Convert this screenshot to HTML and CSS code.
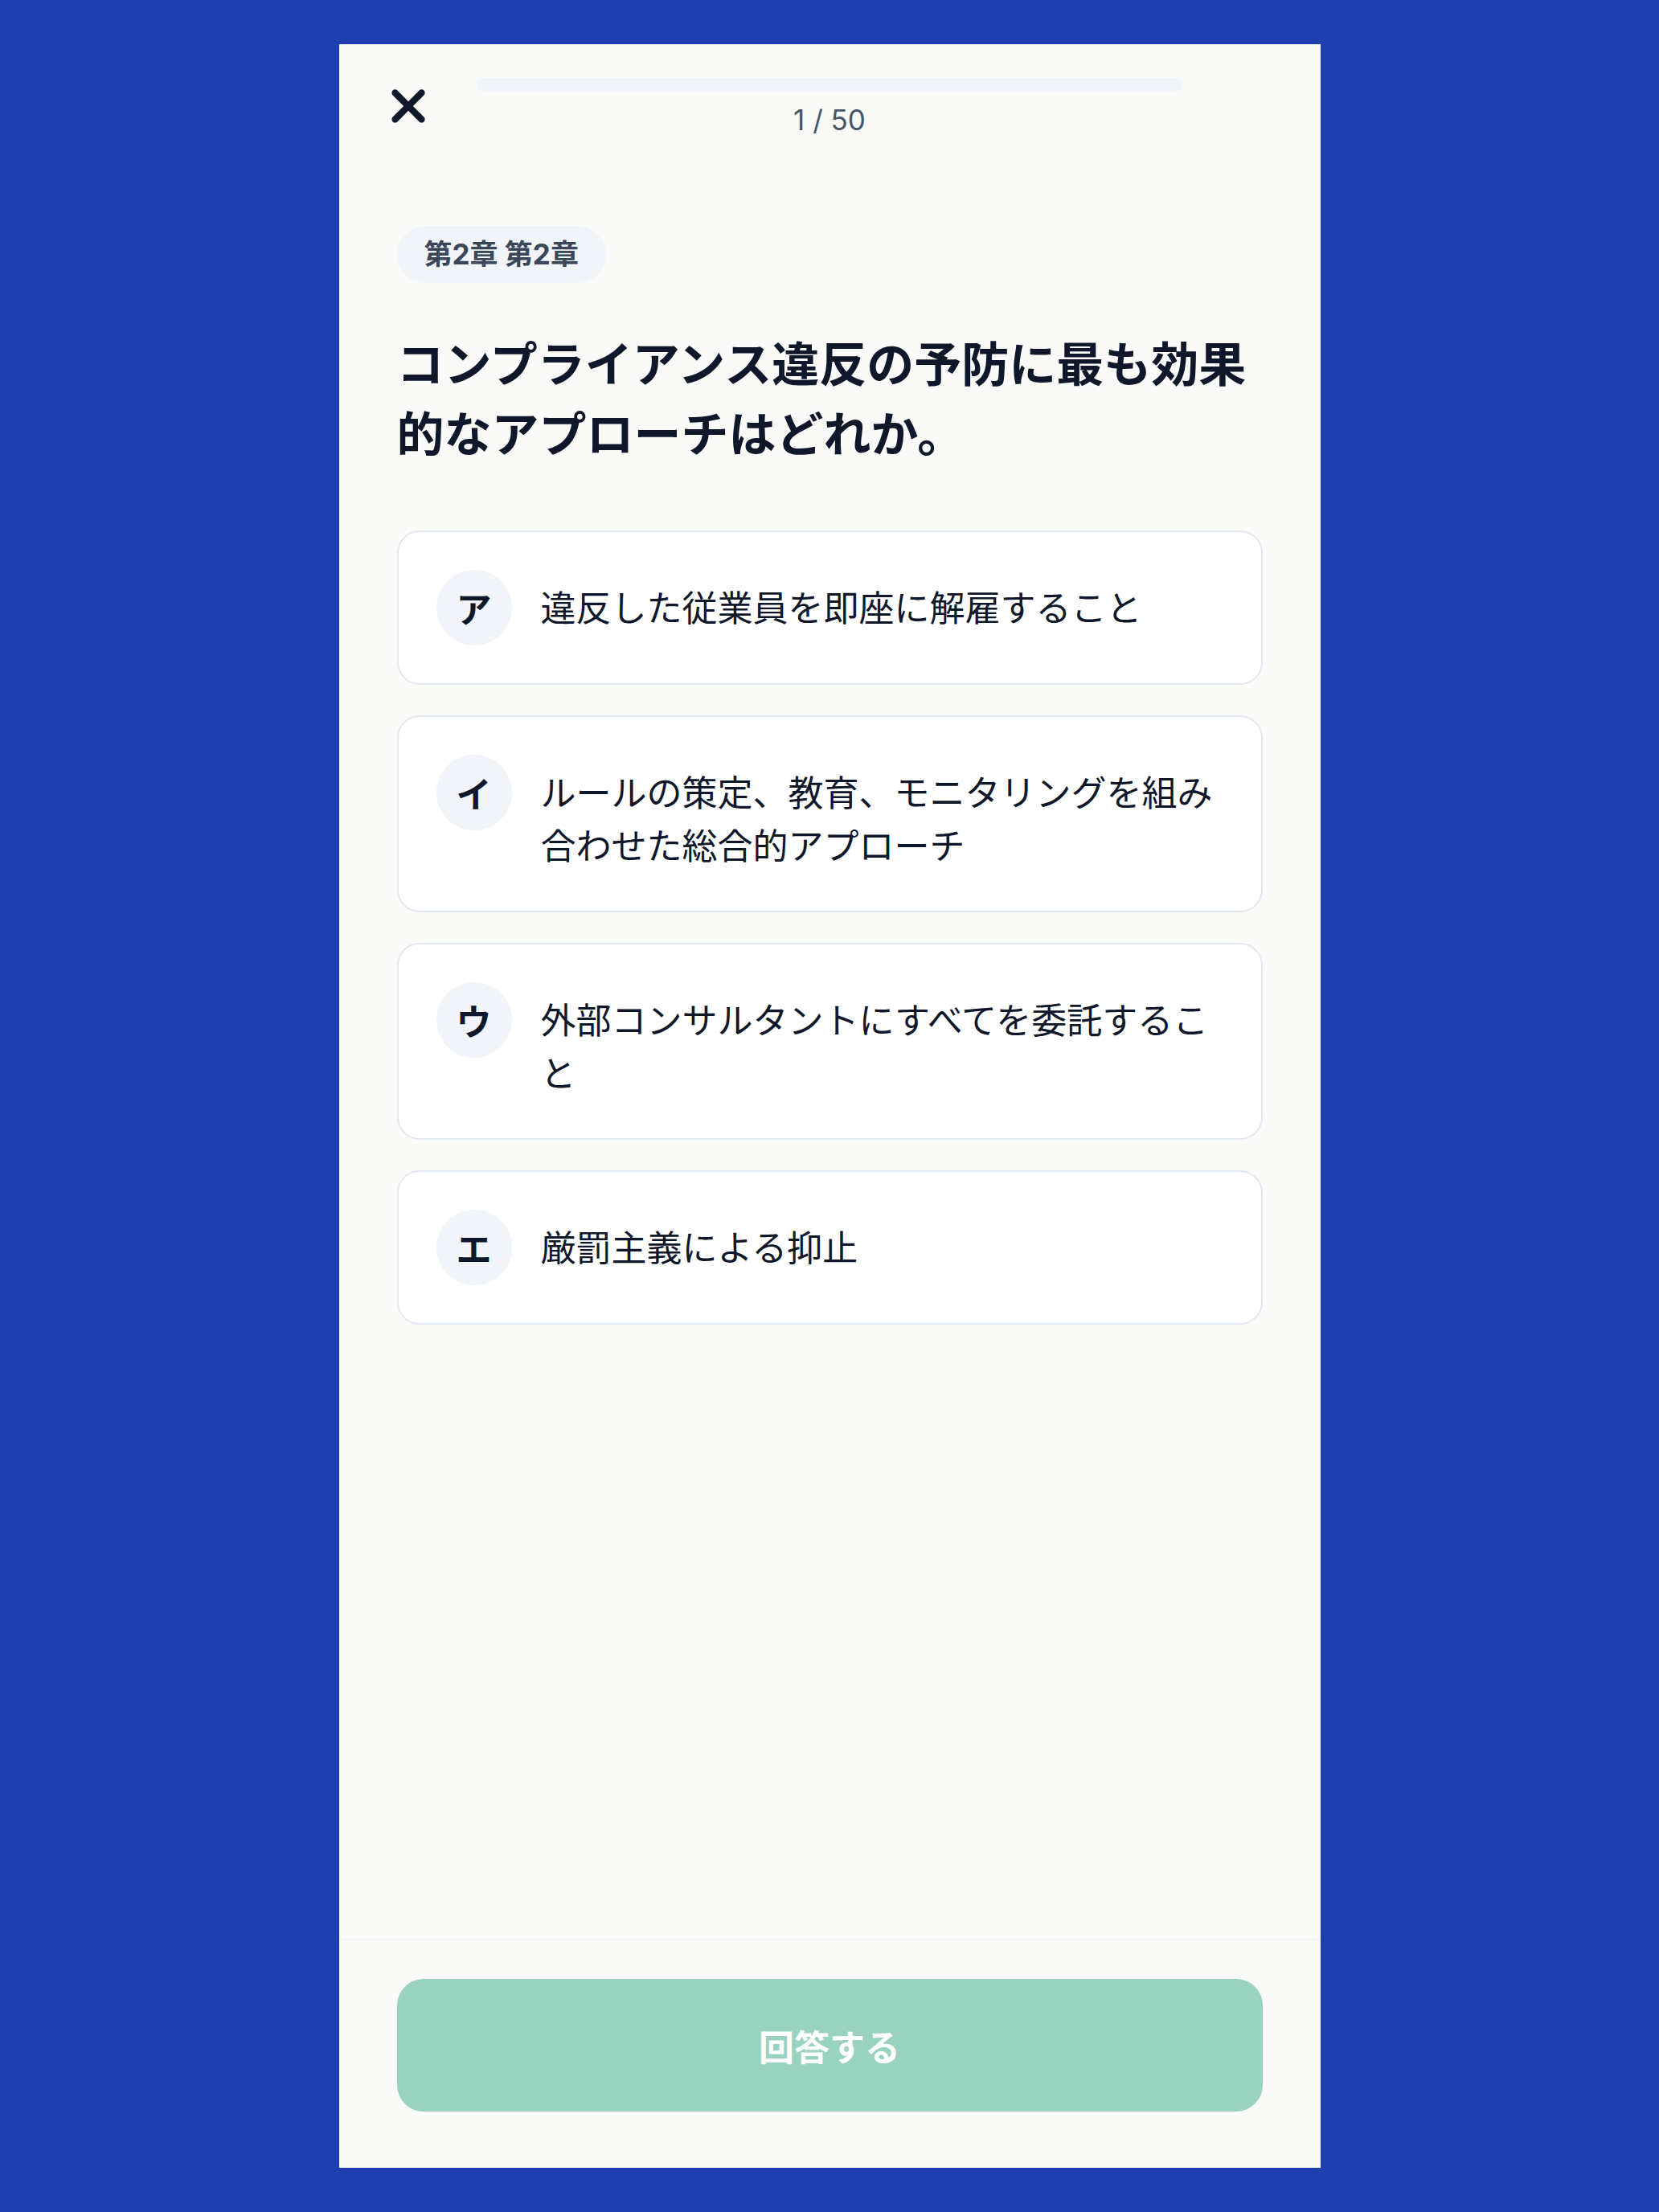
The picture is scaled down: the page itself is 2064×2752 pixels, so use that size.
FILE: index.html
```html
<!DOCTYPE html>
<html lang="ja">
<head>
<meta charset="utf-8">
<title>Quiz</title>
<link rel="stylesheet" href="styles.css">
</head>
<body>
<div class="panel">
  <header class="header">
    <button class="close-btn" aria-label="閉じる">
      <svg viewBox="0 0 24 24" width="66" height="66" fill="none" stroke="#0f172a" stroke-width="3" stroke-linecap="round" stroke-linejoin="round"><path d="M18 6 6 18"/><path d="M6 6l12 12"/></svg>
    </button>
    <div class="progress">
      <div class="progress-track"><div class="progress-fill" style="width:2%"></div></div>
      <div class="progress-text">1 / 50</div>
    </div>
    <div class="spacer"></div>
  </header>

  <main class="main">
    <span class="badge">第2章 第2章</span>
    <h1 class="question">コンプライアンス違反の予防に最も効果的なアプローチはどれか。</h1>
    <div class="options">
      <div class="option">
        <span class="option-label">ア</span>
        <span class="option-text">違反した従業員を即座に解雇すること</span>
      </div>
      <div class="option">
        <span class="option-label">イ</span>
        <span class="option-text">ルールの策定、教育、モニタリングを組み合わせた総合的アプローチ</span>
      </div>
      <div class="option">
        <span class="option-label">ウ</span>
        <span class="option-text">外部コンサルタントにすべてを委託すること</span>
      </div>
      <div class="option">
        <span class="option-label">エ</span>
        <span class="option-text">厳罰主義による抑止</span>
      </div>
    </div>
  </main>

  <footer class="footer">
    <button class="submit-btn">回答する</button>
  </footer>
</div>
</body>
</html>
```

FILE: styles.css
```css
* { box-sizing: border-box; }
html, body { margin: 0; padding: 0; }
body {
  background: #1e40af;
  font-family: Inter, "Noto Sans CJK JP", "Noto Sans", sans-serif;
  color: #0f172a;
  display: flex;
  justify-content: center;
  padding: 55px 0;
  min-height: 2752px;
}
.panel {
  width: 1221px;
  height: 2642px;
  background: #fafaf9;
  display: flex;
  flex-direction: column;
}
.header {
  display: flex;
  align-items: flex-start;
  gap: 43px;
  padding: 35px 44px 0;
}
.close-btn {
  width: 84px;
  height: 84px;
  border: none;
  background: transparent;
  padding: 0;
  display: flex;
  align-items: center;
  justify-content: center;
  cursor: pointer;
}
.spacer { width: 84px; height: 84px; }
.progress {
  flex: 1;
  padding-top: 7px;
  display: flex;
  flex-direction: column;
  align-items: center;
}
.progress-track {
  width: 100%;
  height: 17px;
  border-radius: 999px;
  background: #f1f5f9;
  overflow: hidden;
}
.progress-fill {
  height: 100%;
  background: #f1f5f9;
}
.progress-text {
  margin-top: 9px;
  font-size: 35px;
  line-height: 52px;
  color: #475569;
}
.main {
  flex: 1;
  padding: 106px 72px 0;
}
.badge {
  display: inline-block;
  background: #f1f5f9;
  color: #3b4759;
  font-weight: 700;
  font-size: 35px;
  line-height: 51px;
  padding: 10px 34px;
  border-radius: 999px;
}
.question {
  margin: 58px 0 0;
  font-size: 59px;
  line-height: 87px;
  font-weight: 700;
  color: #0f172a;
}
.options {
  margin-top: 76px;
  display: flex;
  flex-direction: column;
  gap: 38px;
}
.option {
  display: flex;
  align-items: flex-start;
  gap: 36px;
  background: #ffffff;
  border: 2px solid #e2e8f0;
  border-radius: 28px;
  padding: 47px;
}
.option-label {
  flex: none;
  width: 94px;
  height: 94px;
  border-radius: 50%;
  background: #f1f5f9;
  display: flex;
  align-items: center;
  justify-content: center;
  font-size: 44px;
  font-weight: 700;
  color: #0f172a;
}
.option-text {
  flex: 1;
  padding-top: 15px;
  font-size: 44px;
  line-height: 66px;
  color: #0f172a;
}
.footer {
  border-top: 2px solid #f1f5f9;
  padding: 48px 72px 70px;
}
.submit-btn {
  width: 100%;
  height: 165px;
  border: none;
  border-radius: 33px;
  background: #99d2bf;
  color: #ffffff;
  font-family: Inter, "Noto Sans CJK JP", sans-serif;
  font-size: 44px;
  font-weight: 700;
}
```
